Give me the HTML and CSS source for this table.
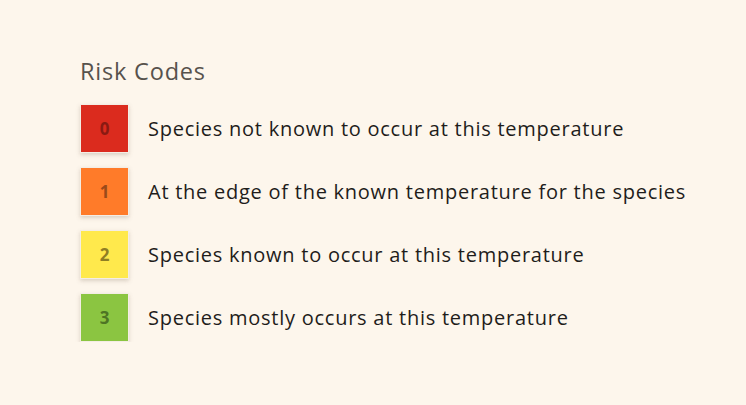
FILE: index.html
```html
<!DOCTYPE html>
<html>
<head>
<meta charset="utf-8">
<link rel="stylesheet" href="styles.css">
</head>
<body>
<section class="legend">
  <h2 class="legend-title">Risk Codes</h2>
  <ul class="legend-list">
    <li class="legend-row"><span class="code code-0">0</span><span class="label">Species not known to occur at this temperature</span></li>
    <li class="legend-row"><span class="code code-1">1</span><span class="label">At the edge of the known temperature for the species</span></li>
    <li class="legend-row"><span class="code code-2">2</span><span class="label">Species known to occur at this temperature</span></li>
    <li class="legend-row"><span class="code code-3">3</span><span class="label">Species mostly occurs at this temperature</span></li>
  </ul>
</section>
</body>
</html>
```
FILE: styles.css
```css
html, body {
  margin: 0;
  padding: 0;
  background: #fdf6ec;
}
body {
  font-family: "Open Sans", "Noto Sans", sans-serif;
  color: #1f1d1b;
}
.legend {
  padding: 55px 0 0 80px;
}
.legend-title {
  margin: 0 0 17px 0;
  font-size: 23.5px;
  font-weight: 400;
  letter-spacing: 0.8px;
  color: #57524c;
  line-height: 32px;
}
.legend-list {
  list-style: none;
  margin: 0;
  padding: 0;
  display: flex;
  flex-direction: column;
  gap: 14px;
}
.legend-row {
  display: flex;
  align-items: center;
  gap: 19px;
}
.code {
  width: 47px;
  height: 47px;
  border: 1px solid #f4ede4;
  box-shadow: 0 2px 4px rgba(120, 100, 80, 0.25);
  display: flex;
  align-items: center;
  justify-content: center;
  font-size: 17px;
  font-weight: 700;
  flex: none;
}
.code-0 { background: #db2b1e; color: #8a1a12; }
.code-1 { background: #ff7b29; color: #9a4a1a; }
.code-2 { background: #ffe94c; color: #8f7e24; }
.code-3 { background: #8bc541; color: #4e7424; }
.label {
  font-size: 20px;
  letter-spacing: 0.75px;
  line-height: 26px;
}
```
